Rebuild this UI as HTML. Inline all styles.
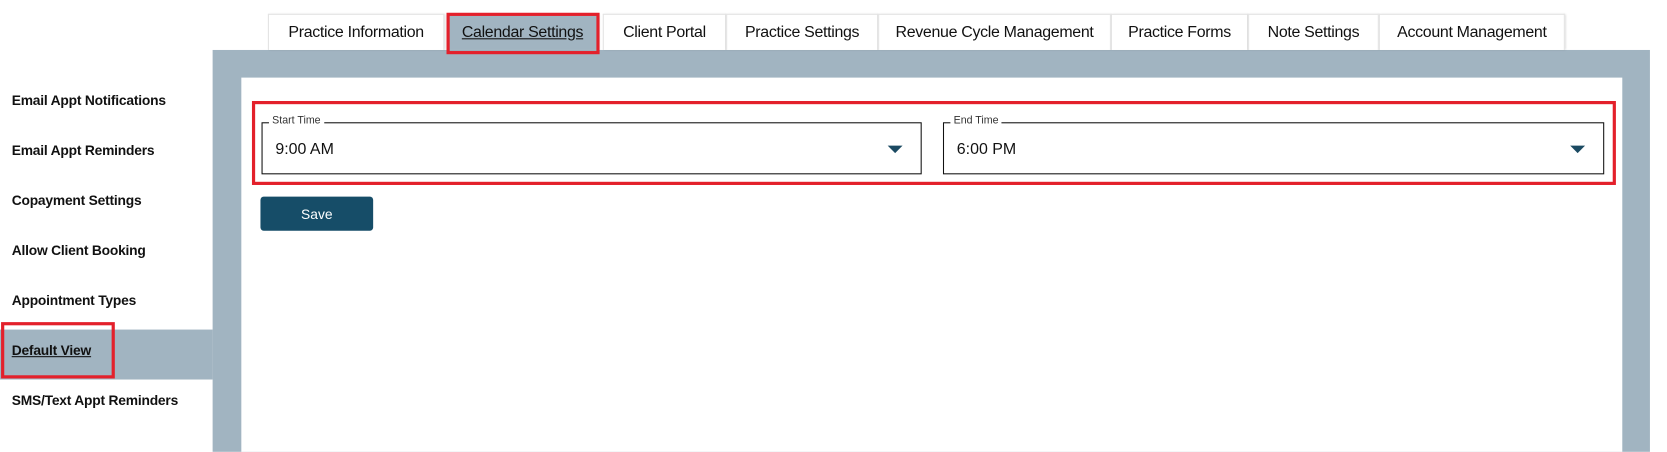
<!DOCTYPE html>
<html><head><style>
*{margin:0;padding:0;box-sizing:border-box}
body{width:1667px;height:425px;background:#fff;overflow:hidden;font-family:"Liberation Sans",sans-serif;color:#111}
#w{position:absolute;left:0;top:0;width:1568px;height:400px;transform:scale(1.0631);transform-origin:0 0}
.abs{position:absolute}
.tab{position:absolute;top:13px;height:34px;background:#fff;border:1px solid #e4e4e4;border-bottom:none;box-shadow:1px 0 2px rgba(0,0,0,.15);font-size:15px;display:flex;align-items:center;justify-content:center;letter-spacing:-.3px}
.side{position:absolute;left:11px;font-size:13px;font-weight:bold;letter-spacing:-.2px}
.field{position:absolute;top:115px;height:49px;border:1px solid #111;background:#fff}
.field .lbl{position:absolute;top:-8px;left:6px;background:#fff;padding:0 3px;font-size:10px;color:#333}
.field .val{position:absolute;left:12px;top:16px;font-size:15px}
.field .arr{position:absolute;right:17px;top:21px;width:0;height:0;border-left:7px solid transparent;border-right:7px solid transparent;border-top:7px solid #1b4a62}
</style></head><body><div id="w">
<div class="abs" style="left:200px;top:47px;width:1352px;height:378px;background:#a1b4c1"></div>
<div class="abs" style="left:227px;top:73px;width:1299px;height:352px;background:#fff"></div>
<div class="abs" style="left:0;top:310px;width:200px;height:47px;background:#a1b4c1"></div>

<div class="tab" style="left:252px;width:166px">Practice Information</div>
<div class="tab" style="left:420px;width:143px;background:#a1b4c1;border:none"><span style="text-decoration:underline">Calendar Settings</span></div>
<div class="abs" style="left:420px;top:12px;width:144px;height:39px;border:3px solid #e3202b"></div>
<div class="tab" style="left:567px;width:116px">Client Portal</div>
<div class="tab" style="left:683px;width:143px">Practice Settings</div>
<div class="tab" style="left:826px;width:219px">Revenue Cycle Management</div>
<div class="tab" style="left:1045px;width:129px">Practice Forms</div>
<div class="tab" style="left:1174px;width:123px">Note Settings</div>
<div class="tab" style="left:1297px;width:175px">Account Management</div>

<div class="side" style="top:87px">Email Appt Notifications</div>
<div class="side" style="top:134px">Email Appt Reminders</div>
<div class="side" style="top:181px">Copayment Settings</div>
<div class="side" style="top:228px">Allow Client Booking</div>
<div class="side" style="top:275px">Appointment Types</div>
<div class="side" style="top:322px;text-decoration:underline">Default View</div>
<div class="side" style="top:369px">SMS/Text Appt Reminders</div>
<div class="abs" style="left:1px;top:303px;width:107px;height:53px;border:3px solid #e3202b"></div>

<div class="abs" style="left:237px;top:95px;width:1283px;height:79px;border:3px solid #e3202b"></div>
<div class="field" style="left:246px;width:621px"><span class="lbl">Start Time</span><span class="val">9:00 AM</span><span class="arr"></span></div>
<div class="field" style="left:887px;width:622px"><span class="lbl">End Time</span><span class="val">6:00 PM</span><span class="arr"></span></div>
<div class="abs" style="left:245px;top:185px;width:106px;height:32px;background:#164d68;border-radius:3px;color:#fff;font-size:13px;display:flex;align-items:center;justify-content:center">Save</div>
</div></body></html>
